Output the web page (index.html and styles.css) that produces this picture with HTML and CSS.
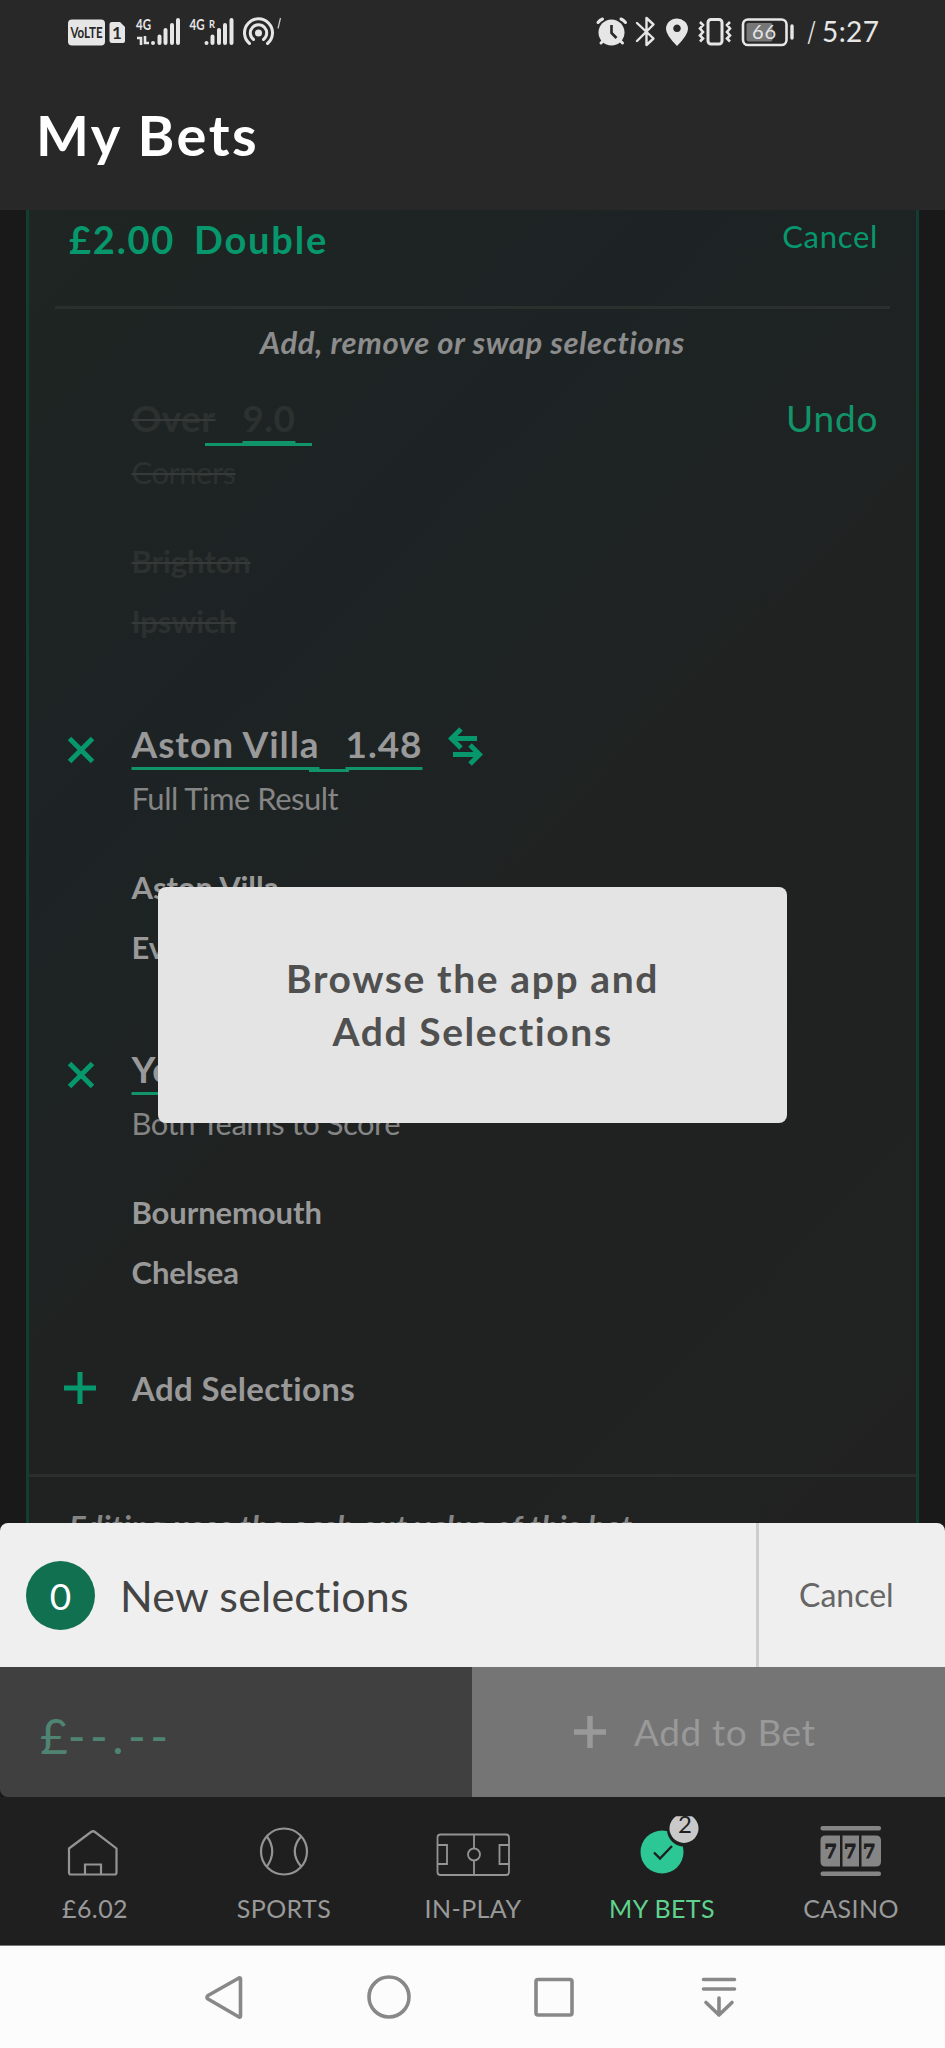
FILE: index.html
```html
<!DOCTYPE html>
<html lang="en">

<head>
    <meta charset="UTF-8">
    <meta name="viewport" content="width=device-width, initial-scale=1.0">
    <title>My Bets</title>
    <link rel="stylesheet" href="styles.css">
</head>

<body>
    <!-- Status bar + title -->
    <header class="top">
        <div class="status">
            <svg class="volte" width="39" height="50" viewBox="67 5 39 50">
                <rect x="68" y="19.5" width="37" height="26" rx="4" fill="#e6e6e6" />
                <text x="70.5" y="38.3" font-size="16" font-weight="700" textLength="32" lengthAdjust="spacingAndGlyphs" fill="#282828">VoLTE</text>
            </svg>
            <svg width="24" height="50" viewBox="106 5 24 50">
                <path d="M112 22h8l5 5v14q0 2-2 2h-11q-2.500 0-2.500-2v-17q0-2 2.500-2z" fill="#e6e6e6" />
                <text x="112" y="38.600" font-size="17" font-weight="700" fill="#282828">1</text>
            </svg>
            <svg width="56" height="50" viewBox="130 5 56 50">
                <text x="136" y="30" font-size="16" font-weight="700" textLength="15" lengthAdjust="spacingAndGlyphs" fill="#e6e6e6">4G</text>
                <path d="M141 45v-7h-4M145 36v7h4" stroke="#e6e6e6" stroke-width="2.600" fill="none" />
                <path d="M153 43v0M159.500 43v-6.500M165.500 43v-13M172 43v-18M178 43v-23" stroke="#e6e6e6" stroke-width="4" stroke-linecap="round" fill="none" />
            </svg>
            <svg width="54" height="50" viewBox="186 5 54 50">
                <text x="189.500" y="30" font-size="16" font-weight="700" textLength="15" lengthAdjust="spacingAndGlyphs" fill="#e6e6e6">4G</text>
                <text x="209" y="27.500" font-size="12" font-weight="700" textLength="6" lengthAdjust="spacingAndGlyphs" fill="#e6e6e6">R</text>
                <path d="M206.500 43v0M212.500 43v-6.500M219 43v-13M225 43v-18M231.500 43v-23" stroke="#e6e6e6" stroke-width="4" stroke-linecap="round" fill="none" />
            </svg>
            <svg width="46" height="50" viewBox="240 5 46 50">
                <circle cx="258.500" cy="33" r="3.500" fill="#e6e6e6" />
                <path d="M253.500 39.500a8.200 8.200 0 1 1 10 0M249.500 43.500a14 14 0 1 1 18 0" stroke="#e6e6e6" stroke-width="3" stroke-linecap="round" fill="none" />
                <path d="M280.500 18l-2.500 10.500" stroke="#ccc" stroke-width="1.200" />
            </svg>
            <span class="spacer"></span>
            <svg width="36" height="50" viewBox="594 5 36 50">
                <circle cx="611.500" cy="32.500" r="13" fill="#e6e6e6" />
                <path d="M598 22.500q2-2.500 4.500-3.500M625.500 22.500q-2-2.500-4.500-3.500M601 43l3-3M622.500 43l-3-3" stroke="#e6e6e6" stroke-width="3" stroke-linecap="round" fill="none" />
                <path d="M611.500 25v8l5 5" stroke="#282828" stroke-width="2.600" fill="none" />
            </svg>
            <svg width="30" height="50" viewBox="630 5 30 50">
                <path d="M637 23l16.500 15.500-7 6.500v-27l7 6.500L637 41" stroke="#e6e6e6" stroke-width="2.400" stroke-linejoin="round" stroke-linecap="round" fill="none" />
            </svg>
            <svg width="34" height="50" viewBox="660 5 34 50">
                <path fill-rule="evenodd" d="M677 46q-11-11-11-17a11 10.500 0 0 1 22 0q0 6-11 17zM677 24.500a3.800 3.800 0 1 0 .01 0z" fill="#e6e6e6" />
            </svg>
            <svg width="42" height="50" viewBox="694 5 42 50">
                <rect x="708" y="19.500" width="14" height="24.500" rx="3" stroke="#e6e6e6" stroke-width="3" fill="none" />
                <path d="M700 22l3 3-3 3.500 3 3.500-3 3.500 3 3-3 3M730 22l-3 3 3 3.500-3 3.500 3 3.500-3 3 3 3" stroke="#e6e6e6" stroke-width="2.600" fill="none" />
            </svg>
            <svg width="64" height="50" viewBox="736 5 64 50">
                <rect x="743" y="19.500" width="43.500" height="25.500" rx="5" stroke="#e6e6e6" stroke-width="2.600" fill="none" />
                <rect x="746.500" y="23" width="26" height="18.500" rx="2" fill="#777" />
                <path d="M792 26v12" stroke="#e6e6e6" stroke-width="3.400" stroke-linecap="round" />
                <text x="752" y="38.500" font-size="20" textLength="24" fill="#e6e6e6">66</text>
            </svg>
            <svg class="clock" width="82" height="50" viewBox="800 5 82 50">
                <text x="807" y="42" font-size="28" textLength="9" lengthAdjust="spacingAndGlyphs">/</text>
                <text x="822" y="42" font-size="28" textLength="57" lengthAdjust="spacing">5:27</text>
            </svg>
        </div>
        <h1>My Bets</h1>
    </header>

    <!-- Bet being edited -->
    <main>
        <section class="card">
            <div class="card-head">
                <span class="stake">£2.00</span>
                <span class="type">Double</span>
                <a class="cancel">Cancel</a>
            </div>
            <p class="hint">Add, remove or swap selections</p>

            <div class="selection removed">
                <div class="title">
                    <span class="name">Over</span><span class="gap"></span><span class="odds">9.0</span>
                    <a class="undo">Undo</a>
                </div>
                <p class="market">Corners</p>
                <p class="team">Brighton</p>
                <p class="team">Ipswich</p>
            </div>

            <div class="selection">
                <div class="title">
                    <svg class="remove" width="28" height="28" viewBox="-14 -14 28 28">
                        <path d="M-11.500-11.500l23 23M11.500-11.500l-23 23" />
                    </svg>
                    <span class="name">Aston Villa</span><span class="gap"></span><span class="odds">1.48</span>
                    <svg class="swap" width="36" height="40" viewBox="447 727 36 40">
                        <path d="M477 738.500h-26M461 729l-9.500 9.500 9.500 9.500M453 754.500h26M470 745l9.500 9.500-9.500 9.500" />
                    </svg>
                </div>
                <p class="market">Full Time Result</p>
                <p class="team">Aston Villa</p>
                <p class="team">Everton</p>
            </div>

            <div class="selection">
                <div class="title">
                    <svg class="remove" width="28" height="28" viewBox="-14 -14 28 28">
                        <path d="M-11.500-11.500l23 23M11.500-11.500l-23 23" />
                    </svg>
                    <span class="name">Yes</span>
                </div>
                <p class="market">Both Teams to Score</p>
                <p class="team">Bournemouth</p>
                <p class="team">Chelsea</p>
            </div>

            <div class="add">
                <svg width="32" height="32" viewBox="0 0 32 32">
                    <path d="M16 0v32M0 16h32" />
                </svg>
                <span>Add Selections</span>
            </div>
            <p class="note">Editing uses the cash out value of this bet</p>
        </section>

        <div class="toast">
            <span>Browse the app and</span>
            <span>Add Selections</span>
        </div>
    </main>

    <!-- Bet slip -->
    <section class="slip">
        <div class="slip-head">
            <span class="count">0</span>
            <span class="label">New selections</span>
            <a class="cancel">Cancel</a>
        </div>
        <div class="slip-foot">
            <div class="amount">£<span>--.--</span></div>
            <div class="add-bet">
                <svg width="32" height="32" viewBox="0 0 32 32">
                    <path d="M16 0v32M0 16h32" />
                </svg>
                <span>Add to Bet</span>
            </div>
        </div>
    </section>

    <!-- App navigation -->
    <nav class="tabs">
        <a>
            <svg width="80" height="66" viewBox="55.500 1814 80 66">
                <path d="M69.500 1848.500l22-16.500q2-1.500 4 0l21.500 16.500v24q0 2-2 2H71.500q-2 0-2-2zM85.500 1874v-9.500h16v9.500" />
            </svg>
            <span>£6.02</span>
        </a>
        <a>
            <svg width="80" height="66" viewBox="243.500 1814 80 66">
                <circle cx="283.500" cy="1851.500" r="23" />
                <path d="M266.500 1836.500q10.500 14.500 0 30M300.500 1836.500q-12.500 14.500 0 30" />
            </svg>
            <span>SPORTS</span>
        </a>
        <a>
            <svg class="pitch" width="80" height="66" viewBox="432.500 1814 80 66">
                <rect x="437" y="1834.500" width="71.500" height="40.500" rx="3" />
                <path d="M473.500 1835v13M473.500 1861v14M437 1845h9.500v19h-9.500M508.500 1845H499v19h9.500" />
                <circle cx="473.500" cy="1854.500" r="6" />
            </svg>
            <span>IN-PLAY</span>
        </a>
        <a class="active">
            <svg width="80" height="66" viewBox="621.500 1814 80 66">
                <circle class="disc" cx="661.500" cy="1852" r="21.500" />
                <path class="tick" d="M653.500 1852.500l6 6 12-12.500" />
                <circle class="ring" cx="683.500" cy="1829.500" r="17" />
                <path class="badge" d="M675.500 1816.300h16a14.500 14.500 0 1 1-16 0z" />
                <text x="677.500" y="1833" font-size="24">2</text>
            </svg>
            <span>MY BETS</span>
        </a>
        <a>
            <svg class="slots" width="80" height="66" viewBox="809.500 1814 80 66">
                <rect x="819" y="1826" width="60.500" height="4.500" rx="2" />
                <rect x="819" y="1871.500" width="60.500" height="4.500" rx="2" />
                <path d="M824 1835.500h14.500v31H824q-5 0-5-5v-21q0-5 5-5zM841 1835.500h16.500v31H841zM860 1835.500h14.500q5 0 5 5v21q0 5-5 5H860z" />
                <text x="823" y="1858">7</text>
                <text x="842.500" y="1858">7</text>
                <text x="861.500" y="1858">7</text>
            </svg>
            <span>CASINO</span>
        </a>
    </nav>

    <!-- System navigation -->
    <footer class="system">
        <svg width="44" height="50" viewBox="202 1972 44 50">
            <path d="M208 1995.500l31-17.500q1.500-.5 1.500 1v37q0 1.500-1.500 1l-31-18q-2-1.500 0-3.500z" />
        </svg>
        <svg width="44" height="50" viewBox="366.500 1972 44 50">
            <circle cx="388.500" cy="1997" r="20" />
        </svg>
        <svg width="44" height="50" viewBox="531 1972 44 50">
            <rect x="535" y="1979.500" width="36" height="35.500" rx="2" />
        </svg>
        <svg width="44" height="50" viewBox="696.500 1972 44 50">
            <path d="M703 1979.500h31M703 1989h31M718.500 1998v17M705.500 2002.500l13 12.500 13-12.500" />
        </svg>
    </footer>
</body>

</html>
```

FILE: styles.css
```css
* {
    box-sizing: border-box;
}

body {
    margin: 0;
    width: 945px;
    height: 2048px;
    display: flex;
    flex-direction: column;
    overflow: hidden;
    background: #191919;
    font-family: Lato, "Liberation Sans", sans-serif;
    font-variant-ligatures: none;
    color: #999;
}

p,
h1 {
    margin: 0;
}

svg {
    flex: none;
}

/* Header */
.top {
    height: 210px;
    flex: none;
    background: #282828;
}

.status {
    display: flex;
    padding: 5px 63px 0 67px;
}

.spacer {
    flex: 1;
}

.clock {
    fill: #e6e6e6;
}

h1 {
    margin-top: 47px;
    padding-left: 36px;
    font-size: 56px;
    line-height: 66px;
    font-weight: 700;
    letter-spacing: 2.5px;
    color: #fff;
}

/* Card */
main {
    position: relative;
    height: 1313px;
    flex: none;
    padding: 0 26px;
    overflow: hidden;
}

.card {
    height: 1340px;
    border: 3px solid #123d31;
    border-width: 0 3px;
    background: linear-gradient(135deg, #1f2522 0%, #1d2324 30%, #1f2221 55%, #212121 100%);
}

.card-head {
    display: flex;
    margin: 0 26px;
    height: 99px;
    padding: 6px 12px 0 14px;
    border-bottom: 3px solid #2b302f;
    font-size: 38px;
    line-height: 46px;
    font-weight: 700;
    letter-spacing: 1.8px;
    color: #07976c;
}

.stake {
    width: 125px;
}

.card-head .cancel {
    margin-left: auto;
    font-size: 31px;
    line-height: 40px;
    font-weight: 400;
    letter-spacing: 0.7px;
}

.hint {
    margin-top: 13px;
    font-size: 31px;
    line-height: 40px;
    font-weight: 700;
    font-style: italic;
    letter-spacing: 0.6px;
    text-align: center;
    color: #8c8c8c;
}

/* Selections */
.selection {
    margin: 0 37.5px 79.5px 102.5px;
    height: 246px;
}

.hint + .selection {
    margin-top: 33px;
}

.title {
    display: flex;
    position: relative;
    height: 46px;
    font-size: 37px;
    line-height: 46px;
    font-weight: 700;
    letter-spacing: 0.95px;
}

.title .name,
.title .odds {
    text-decoration: underline 3px #129469;
    text-underline-offset: 9px;
    text-decoration-skip-ink: none;
}

.gap {
    position: relative;
    width: 26px;
}

.gap::after {
    content: "";
    position: absolute;
    left: -11px;
    right: -3px;
    top: 48px;
    height: 3px;
    background: #129469;
}

/* Icon in the gutter left of the selection */
.remove {
    position: absolute;
    left: -65px;
    top: 15px;
}

.remove path,
.swap path,
.add path {
    fill: none;
    stroke: #07976c;
    stroke-width: 5;
}

.swap {
    margin: 6px 0 0 25px;
}

.market {
    margin-top: 11px;
    font-size: 31px;
    line-height: 40px;
    letter-spacing: -0.5px;
    color: #858585;
}

.team {
    margin-top: 20px;
    font-size: 31px;
    line-height: 40px;
    font-weight: 700;
    letter-spacing: -0.1px;
}

.market + .team {
    margin-top: 49px;
}

.removed .title {
    letter-spacing: 0.4px;
}

.removed,
.removed .market {
    color: #2c312f;
}

.removed .name,
.removed .market,
.removed .team {
    text-decoration: line-through 2px #363b39;
}

.removed .name {
    width: 83px;
}

.removed .gap {
    width: 28px;
}

.removed .gap::after {
    left: -10px;
    right: -69px;
}

.undo {
    margin-left: auto;
    font-weight: 400;
    letter-spacing: 0.9px;
    color: #129469;
}

.add {
    display: flex;
    align-items: center;
    gap: 36px;
    margin-top: -4px;
    padding: 0 35px 66px;
    border-bottom: 3px solid #2b2e2d;
    font-size: 33px;
    line-height: 40px;
    font-weight: 700;
    letter-spacing: 0.35px;
}

.note {
    padding: 29px 40px 0;
    font-size: 31px;
    line-height: 40px;
    font-weight: 700;
    font-style: italic;
    letter-spacing: 0.65px;
    color: #858585;
}

.toast {
    position: absolute;
    left: 158px;
    top: 677px;
    width: 629px;
    height: 236px;
    display: flex;
    flex-direction: column;
    align-items: center;
    padding-top: 65px;
    border-radius: 8px;
    background: #e4e4e4;
    font-size: 39px;
    line-height: 53px;
    font-weight: 700;
    letter-spacing: 1.6px;
    color: #505050;
}

/* Bet slip */
.slip {
    height: 274px;
    flex: none;
    overflow: hidden;
    border-radius: 8px 8px 0 8px;
}

.slip-head {
    display: flex;
    align-items: center;
    height: 144px;
    padding-left: 26px;
    background: #efefef;
}

.count {
    width: 69px;
    height: 69px;
    margin-right: 25px;
    border-radius: 50%;
    background: #117050;
    color: #fff;
    font-size: 37px;
    line-height: 69px;
    text-align: center;
}

.label {
    font-size: 43px;
    letter-spacing: 0.2px;
    color: #444;
}

.slip-head .cancel {
    width: 189px;
    height: 144px;
    margin-left: auto;
    padding-left: 40px;
    border-left: 3px solid #cdcdcd;
    font-size: 32px;
    line-height: 144px;
    color: #666;
}

.slip-foot {
    display: flex;
    height: 130px;
}

.amount {
    width: 472px;
    padding-left: 40px;
    background: #404040;
    font-size: 48px;
    line-height: 138px;
    color: #4f8473;
}

.amount span {
    letter-spacing: 4.4px;
}

.add-bet {
    display: flex;
    flex: 1;
    align-items: center;
    gap: 28px;
    padding-left: 102px;
    background: #757575;
    font-size: 37px;
    line-height: 130px;
    letter-spacing: 0.6px;
    color: #999;
}

.add-bet path {
    stroke: #999;
    stroke-width: 5.5;
}

/* Tabs */
.tabs {
    display: flex;
    height: 149px;
    flex: none;
    padding-top: 17px;
    background: #1f1f1f;
    border-bottom: 1px solid #777;
}

.tabs a {
    width: 189px;
    display: flex;
    flex-direction: column;
    align-items: center;
    font-size: 25px;
    line-height: 30px;
    letter-spacing: 0.4px;
    color: #999;
}

.tabs span {
    margin: 13px 0 0 1px;
}

.tabs svg {
    fill: none;
    stroke: #949494;
    stroke-width: 2.2;
}

.tabs .pitch {
    stroke-width: 1.8;
}

.tabs .slots {
    fill: #858585;
    stroke: none;
}

.slots text {
    font-family: "DejaVu Serif", serif;
    font-size: 18px;
    font-weight: 700;
    letter-spacing: 0;
    fill: #1f1f1f;
    stroke: #1f1f1f;
    stroke-width: 1;
}

.tabs .active {
    color: #5fd38d;
}

.active .disc {
    fill: #2dc796;
    stroke: none;
}

.active .tick {
    stroke: #1f1f1f;
    stroke-width: 2.4;
}

.active .ring {
    fill: #1f1f1f;
    stroke: none;
}

.active .badge {
    fill: #c9c9c9;
    stroke: none;
}

.active text {
    fill: #1f1f1f;
    stroke: none;
}

/* System bar */
.system {
    display: flex;
    flex: 1;
    justify-content: space-between;
    padding: 26px 204px 0 202px;
    background: #fcfcfc;
}

.system svg {
    fill: none;
    stroke: #888;
    stroke-width: 3.6;
    stroke-linecap: round;
    stroke-linejoin: round;
}
```
